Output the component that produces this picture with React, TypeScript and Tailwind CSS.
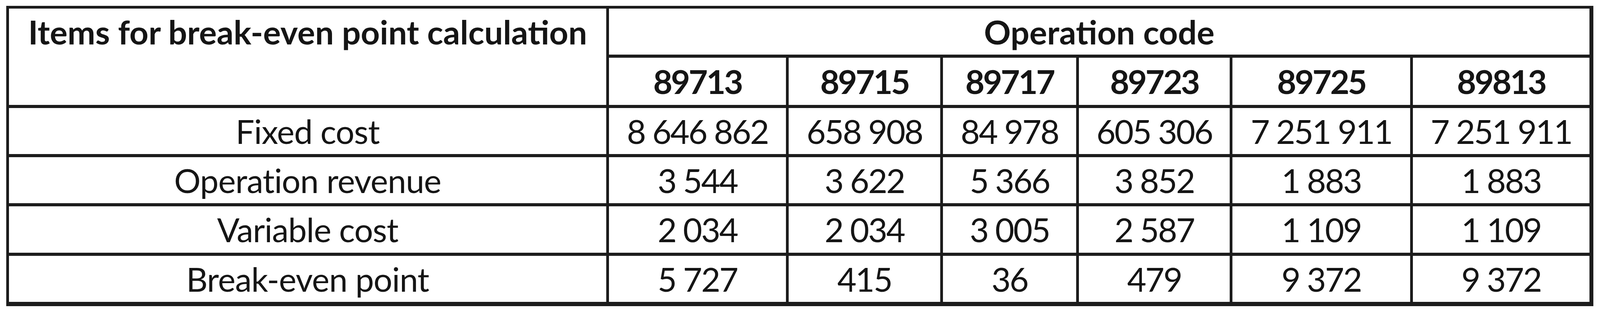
import React from "react";

const codes = ["89713", "89715", "89717", "89723", "89725", "89813"];

const rows = [
  { label: "Fixed cost", values: ["8 646 862", "658 908", "84 978", "605 306", "7 251 911", "7 251 911"] },
  { label: "Operation revenue", values: ["3 544", "3 622", "5 366", "3 852", "1 883", "1 883"] },
  { label: "Variable cost", values: ["2 034", "2 034", "3 005", "2 587", "1 109", "1 109"] },
  { label: "Break-even point", values: ["5 727", "415", "36", "479", "9 372", "9 372"] },
];

export default function App() {
  return (
    <div className="min-h-[800px] bg-white pt-[15px] pl-[16px] font-['Lato','Open_Sans',sans-serif] text-[85px] leading-none text-[#151515]">
      {/* grid on a dark ground: the gaps and padding read as the table rules */}
      <div className="grid w-fit grid-cols-[1529px_453px_388px_341px_386px_455px_452px] grid-rows-[118px_121px_118px_118px_119px_118px] gap-x-[7px] gap-y-[8px] bg-[#1c1c1c] pt-[7px] pr-[10px] pb-[11px] pl-[7px]">
        <div className="row-span-2 flex flex-col bg-white">
          <div className="flex h-[118px] items-center justify-center font-bold">
            Items for break-even point calculation
          </div>
        </div>
        <div className="col-span-6 flex items-center justify-center bg-white font-bold">Operation code</div>

        {codes.map((c) => (
          <div key={c} className="flex items-center justify-center bg-white font-bold tracking-[-4px]">
            {c}
          </div>
        ))}

        {rows.map((r) => (
          <React.Fragment key={r.label}>
            <div className="flex items-center justify-center bg-white tracking-[-1px]">{r.label}</div>
            {r.values.map((v, i) => (
              <div key={i} className="flex items-center justify-center bg-white tracking-[-3px]">
                {v}
              </div>
            ))}
          </React.Fragment>
        ))}
      </div>
    </div>
  );
}
